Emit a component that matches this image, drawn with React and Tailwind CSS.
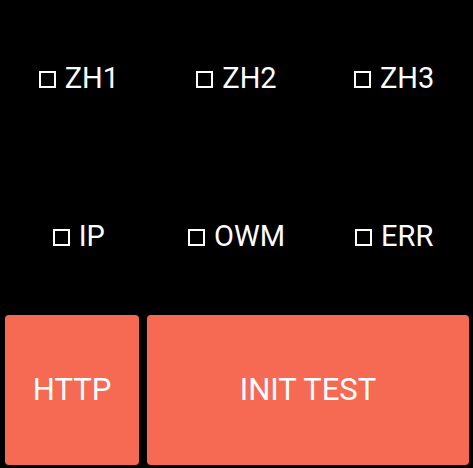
export default function App() {
  const items = ["ZH1", "ZH2", "ZH3", "IP", "OWM", "ERR"];
  return (
    <div className="w-[473px] h-[468px] bg-black flex flex-col" style={{ fontFamily: "Roboto, sans-serif" }}>
      <div className="h-[315px] grid grid-cols-3 grid-rows-2 text-white text-[29px]">
        {items.map((t) => (
          <div key={t} className="flex items-center justify-center">
            <span>
              <span className="inline-block w-[17px] h-[17px] border-2 border-white mr-[9px]"></span>
              {t}
            </span>
          </div>
        ))}
      </div>
      <div className="flex gap-2 pl-[5px] pr-[4px] h-[150px] text-white text-[31px]">
        <button className="w-[134px] h-full bg-[#f66a53] rounded-[4px] flex items-center justify-center">HTTP</button>
        <button className="flex-1 h-full bg-[#f66a53] rounded-[4px] flex items-center justify-center">INIT TEST</button>
      </div>
    </div>
  );
}
